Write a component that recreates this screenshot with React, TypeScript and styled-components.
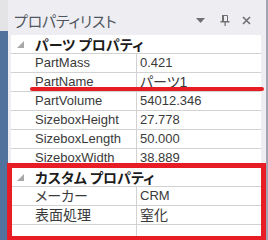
import React from "react";
import styled, { createGlobalStyle } from "styled-components";

const Global = createGlobalStyle`
  html, body { margin: 0; padding: 0; background: #eeeef2; }
  body { width: 268px; height: 240px; overflow: hidden; }
`;

const Screen = styled.div`
  position: relative;
  width: 268px;
  height: 240px;
  display: flex;
  overflow: hidden;
  font-family: "Liberation Sans", "Noto Sans CJK JP", sans-serif;
`;

const SideWindow = styled.div`
  width: 8px;
  display: flex;
  flex-direction: column;
`;
const SideTop = styled.div`
  height: 31px;
  background: #e4e4e6;
`;
const SideBody = styled.div`
  flex: 1;
  background: #52729e;
`;

const Panel = styled.div`
  flex: 1;
  min-width: 0;
  display: flex;
  flex-direction: column;
  background: #eeeef2;
  padding: 0 5px 0 3px;
  border-right: 2px solid #a2a6b2;
`;

const Header = styled.div`
  height: 30px;
  padding: 5px 10px 0 3px;
  display: flex;
  align-items: center;
  justify-content: space-between;
  background: #eeeef2;
`;

const Title = styled.div`
  font-family: "Noto Sans CJK JP", sans-serif;
  font-feature-settings: "palt";
  font-size: 15px;
  color: #50565f;
  letter-spacing: -0.2px;
`;

const HeaderTools = styled.div`
  display: flex;
  align-items: center;
  gap: 12px;
`;

const ToolButton = styled.span<{ $extra?: number }>`
  display: flex;
  align-items: center;
  margin-right: ${(p) => p.$extra ?? 0}px;
  color: #707070;
`;

const Grid = styled.div`
  flex: 1;
  display: flex;
  flex-direction: column;
  background: #ffffff;
  overflow: hidden;
`;

const CategoryRow = styled.div`
  height: 19px;
  box-sizing: border-box;
  border-bottom: 1px solid #d2d2d2;
  display: flex;
  align-items: center;
  padding-left: 6px;
  gap: 11px;
  flex-shrink: 0;
`;

const CategoryLabel = styled.span`
  font-family: "Noto Sans CJK JP", sans-serif;
  font-feature-settings: "palt";
  font-weight: 700;
  font-size: 14px;
  color: #1c1c1c;
  line-height: 18px;
`;

const PropRow = styled.div`
  height: 19px;
  box-sizing: border-box;
  border-bottom: 1px solid #d2d2d2;
  display: grid;
  grid-template-columns: 126px 1fr;
  flex-shrink: 0;
`;

const Cell = styled.div<{ $cjk?: boolean; $name?: boolean }>`
  display: flex;
  align-items: center;
  padding-left: ${(p) => (p.$name ? 24 : 3)}px;
  border-right: ${(p) => (p.$name ? "1px solid #d2d2d2" : "none")};
  font-size: ${(p) => (p.$cjk ? 14 : 13)}px;
  font-feature-settings: "palt";
  color: #3a3a3a;
  line-height: 18px;
  white-space: nowrap;
  overflow: hidden;
`;

const Underline = styled.div`
  position: absolute;
  left: 30px;
  top: 87px;
  width: 234px;
  height: 4px;
  border-radius: 2px;
  background: #e81c24;
`;

const Highlight = styled.div`
  position: absolute;
  left: 7px;
  top: 163px;
  width: 259px;
  height: 78px;
  box-sizing: border-box;
  border: 5px solid #e81c24;
`;

const Expander = () => (
  <svg width="7" height="7" viewBox="0 0 7 7">
    <polygon points="7,0 7,7 0,7" fill="#a8a8a8" />
  </svg>
);

const DropIcon = () => (
  <svg width="9" height="5" viewBox="0 0 9 5">
    <polygon points="0,0 9,0 4.5,5" fill="currentColor" />
  </svg>
);

const PinIcon = () => (
  <svg width="10" height="11" viewBox="0 0 10 11">
    <path d="M2.5 0.5 H7.5 V6.5 M2.5 0.5 V6.5" stroke="currentColor" strokeWidth="1" fill="none" />
    <rect x="2" y="0" width="2" height="7" fill="currentColor" />
    <rect x="0.5" y="6" width="9" height="1.5" fill="currentColor" />
    <rect x="4.5" y="7" width="1.2" height="4" fill="currentColor" />
  </svg>
);

const CloseIcon = () => (
  <svg width="9" height="9" viewBox="0 0 9 9">
    <path d="M1 1 L8 8 M8 1 L1 8" stroke="currentColor" strokeWidth="1.6" />
  </svg>
);

type Prop = { name: string; value: string; cjkName?: boolean; cjkValue?: boolean };

const sections: { title: string; props: Prop[] }[] = [
  {
    title: "パーツ プロパティ",
    props: [
      { name: "PartMass", value: "0.421" },
      { name: "PartName", value: "パーツ1", cjkValue: true },
      { name: "PartVolume", value: "54012.346" },
      { name: "SizeboxHeight", value: "27.778" },
      { name: "SizeboxLength", value: "50.000" },
      { name: "SizeboxWidth", value: "38.889" },
    ],
  },
  {
    title: "カスタム プロパティ",
    props: [
      { name: "メーカー", value: "CRM", cjkName: true },
      { name: "表面処理", value: "窒化", cjkName: true, cjkValue: true },
      { name: "", value: "" },
    ],
  },
];

export default function App() {
  return (
    <Screen>
      <Global />
      <SideWindow>
        <SideTop />
        <SideBody />
      </SideWindow>
      <Panel>
        <Header>
          <Title>プロパティリスト</Title>
          <HeaderTools>
            <ToolButton $extra={3}>
              <DropIcon />
            </ToolButton>
            <ToolButton>
              <PinIcon />
            </ToolButton>
            <ToolButton>
              <CloseIcon />
            </ToolButton>
          </HeaderTools>
        </Header>
        <Grid>
          {sections.map((s) => (
            <React.Fragment key={s.title}>
              <CategoryRow>
                <Expander />
                <CategoryLabel>{s.title}</CategoryLabel>
              </CategoryRow>
              {s.props.map((p, i) => (
                <PropRow key={s.title + i}>
                  <Cell $name $cjk={p.cjkName}>{p.name}</Cell>
                  <Cell $cjk={p.cjkValue}>{p.value}</Cell>
                </PropRow>
              ))}
            </React.Fragment>
          ))}
        </Grid>
      </Panel>
      <Underline />
      <Highlight />
    </Screen>
  );
}
